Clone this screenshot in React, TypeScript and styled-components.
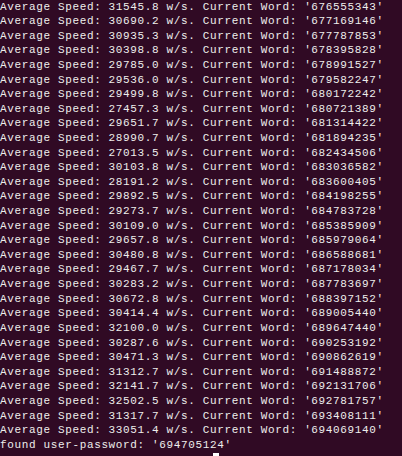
import React from "react";
import styled, { createGlobalStyle } from "styled-components";

const Global = createGlobalStyle`
  html, body {
    margin: 0;
    padding: 0;
    background: #300a24;
    overflow: hidden;
  }
`;

const Terminal = styled.div`
  width: 402px;
  height: 456px;
  box-sizing: border-box;
  background: #300a24;
  color: #eeeeec;
  font-family: "Liberation Mono", "DejaVu Sans Mono", monospace;
  font-size: 11px;
  letter-spacing: 0.64px;
  line-height: 14.62px;
  padding-top: 0;
  margin-top: -0.5px;
  overflow: hidden;
  white-space: pre;
`;

const Line = styled.div`
  height: 14.62px;
`;

const CursorRow = styled.div`
  height: 14.62px;
  padding-left: 213px;
  display: flex;
  align-items: flex-start;
`;

const Cursor = styled.span`
  display: block;
  width: 6px;
  height: 8px;
  margin-top: 0.5px;
  background: #ffffff;
`;

const rows: [string, string][] = [
  ["31545.8", "676555343"],
  ["30690.2", "677169146"],
  ["30935.3", "677787853"],
  ["30398.8", "678395828"],
  ["29785.0", "678991527"],
  ["29536.0", "679582247"],
  ["29499.8", "680172242"],
  ["27457.3", "680721389"],
  ["29651.7", "681314422"],
  ["28990.7", "681894235"],
  ["27013.5", "682434506"],
  ["30103.8", "683036582"],
  ["28191.2", "683600405"],
  ["29892.5", "684198255"],
  ["29273.7", "684783728"],
  ["30109.0", "685385909"],
  ["29657.8", "685979064"],
  ["30480.8", "686588681"],
  ["29467.7", "687178034"],
  ["30283.2", "687783697"],
  ["30672.8", "688397152"],
  ["30414.4", "689005440"],
  ["32100.0", "689647440"],
  ["30287.6", "690253192"],
  ["30471.3", "690862619"],
  ["31312.7", "691488872"],
  ["32141.7", "692131706"],
  ["32502.5", "692781757"],
  ["31317.7", "693408111"],
  ["33051.4", "694069140"],
];

export default function App() {
  return (
    <>
      <Global />
      <Terminal>
        {rows.map(([speed, word], i) => (
          <Line key={i}>{`Average Speed: ${speed} w/s. Current Word: '${word}'`}</Line>
        ))}
        <Line>found user-password: '694705124'</Line>
        <CursorRow>
          <Cursor />
        </CursorRow>
      </Terminal>
    </>
  );
}
